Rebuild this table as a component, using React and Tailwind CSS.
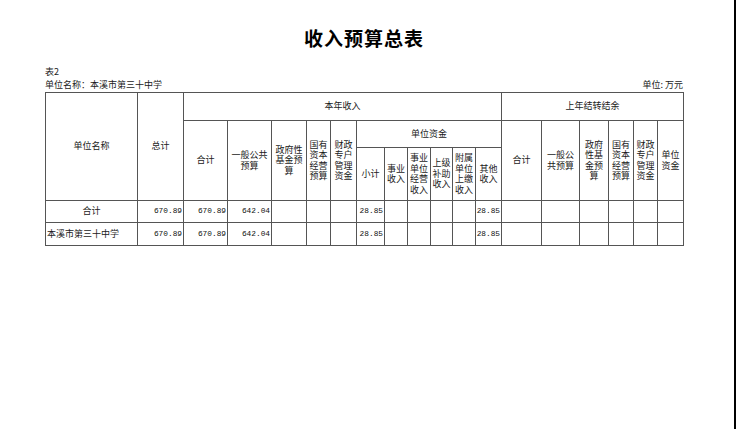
import React from "react";

const cols = [92, 46, 44, 44, 35, 24, 26, 28, 23, 23, 22, 23, 26, 40, 38, 29, 25, 24, 26];

const Lines = ({ lines }) => (
  <div className="flex flex-col items-center leading-[10.5px]">
    {lines.map((l, i) => (
      <span key={i}>{l}</span>
    ))}
  </div>
);

// values for columns after 单位名称
const values = ["670.89", "670.89", "642.04", "", "", "", "28.85", "", "", "", "", "28.85", "", "", "", "", "", ""];

const rows = [
  { name: "合计", center: true },
  { name: "本溪市第三十中学", center: false },
];

const App = () => {
  const th = "border border-[#555] font-normal text-center align-middle p-0";
  const td = "border border-[#555] p-0 pr-[1px] text-right align-middle font-['Liberation_Mono',monospace] text-[7.8px] text-[#111]";

  return (
    <div className="flex w-[737px] h-[429px] bg-white text-[#1a1a1a] font-['Noto_Sans_CJK_SC',sans-serif]">
      <div className="w-[734px] h-full pl-[45px] pt-[26px]">
        <div className="w-[638px]">
          <h1 className="text-center text-[19px] leading-[24px] font-bold text-black tracking-[1px]">
            收入预算总表
          </h1>
          <div className="mt-[16px] text-[9px] leading-[12px]">表2</div>
          <div className="flex justify-between text-[9px] leading-[12px] mt-[1px]">
            <span>单位名称：本溪市第三十中学</span>
            <span>单位: 万元</span>
          </div>

          <table className="table-fixed border-collapse w-[638px] text-[9px] leading-[10.5px] mt-[1px]">
            <colgroup>
              {cols.map((w, i) => (
                <col key={i} style={{ width: w }} />
              ))}
            </colgroup>
            <thead>
              <tr className="h-[28px]">
                <th rowSpan={3} className={th}>单位名称</th>
                <th rowSpan={3} className={th}>总计</th>
                <th colSpan={11} className={th}>本年收入</th>
                <th colSpan={6} className={th}>上年结转结余</th>
              </tr>
              <tr className="h-[27px]">
                <th rowSpan={2} className={th}>合计</th>
                <th rowSpan={2} className={th}><Lines lines={["一般公共", "预算"]} /></th>
                <th rowSpan={2} className={th}><Lines lines={["政府性", "基金预", "算"]} /></th>
                <th rowSpan={2} className={th}><Lines lines={["国有", "资本", "经营", "预算"]} /></th>
                <th rowSpan={2} className={th}><Lines lines={["财政", "专户", "管理", "资金"]} /></th>
                <th colSpan={6} className={th}>单位资金</th>
                <th rowSpan={2} className={th}>合计</th>
                <th rowSpan={2} className={th}><Lines lines={["一般公", "共预算"]} /></th>
                <th rowSpan={2} className={th}><Lines lines={["政府", "性基", "金预", "算"]} /></th>
                <th rowSpan={2} className={th}><Lines lines={["国有", "资本", "经营", "预算"]} /></th>
                <th rowSpan={2} className={th}><Lines lines={["财政", "专户", "管理", "资金"]} /></th>
                <th rowSpan={2} className={th}><Lines lines={["单位", "资金"]} /></th>
              </tr>
              <tr className="h-[53px]">
                <th className={th}>小计</th>
                <th className={th}><Lines lines={["事业", "收入"]} /></th>
                <th className={th}><Lines lines={["事业", "单位", "经营", "收入"]} /></th>
                <th className={th}><Lines lines={["上级", "补助", "收入"]} /></th>
                <th className={th}><Lines lines={["附属", "单位", "上缴", "收入"]} /></th>
                <th className={th}><Lines lines={["其他", "收入"]} /></th>
              </tr>
            </thead>
            <tbody>
              {rows.map((r, i) => (
                <tr key={i} className={i === 0 ? "h-[22px]" : "h-[23px]"}>
                  <td className={`border border-[#555] p-0 align-middle ${r.center ? "text-center" : "text-left pl-[1px]"}`}>
                    {r.name}
                  </td>
                  {values.map((v, j) => (
                    <td key={j} className={td}>{v}</td>
                  ))}
                </tr>
              ))}
            </tbody>
          </table>
        </div>
      </div>
      <div className="w-[2px] h-full bg-black" />
    </div>
  );
};

export default App;
